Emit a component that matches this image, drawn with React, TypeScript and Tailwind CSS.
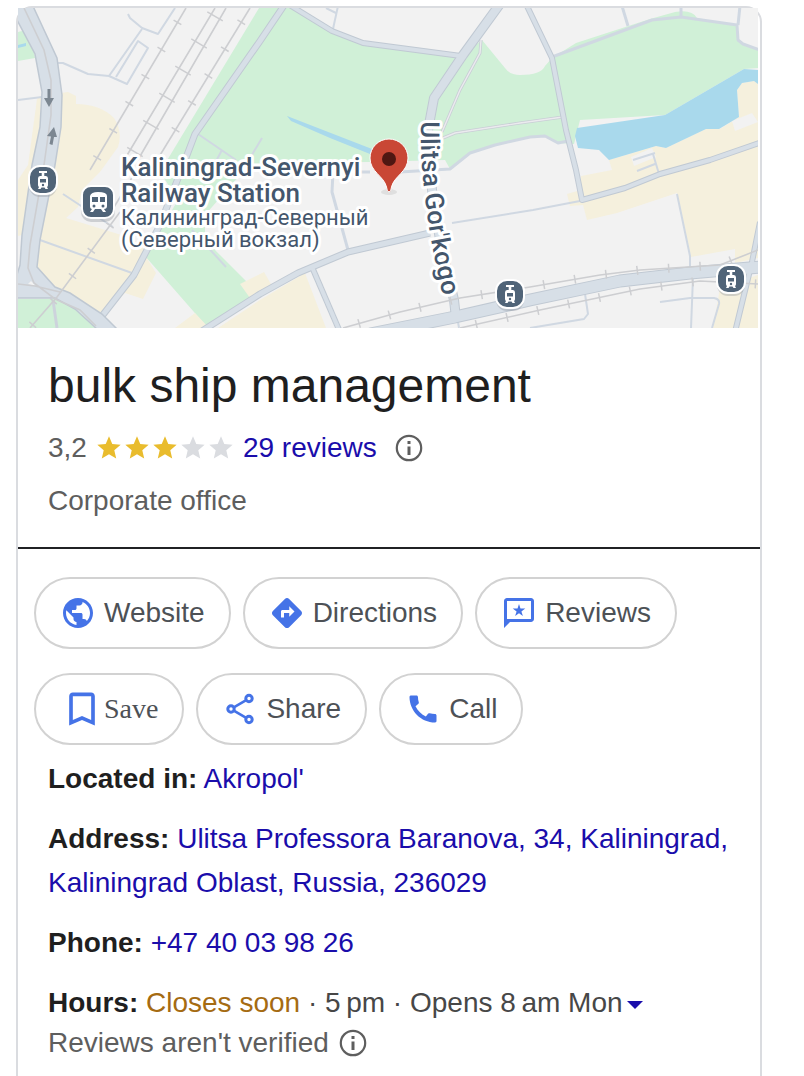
import React from 'react';
import { MdBookmarkBorder, MdCall, MdDirections, MdPublic, MdStar } from 'react-icons/md';

const roads: { d: string; w: number }[] = [
    { d: 'M500 4L463 55L434 98L428 130L432 190L440 240L454 300L456 318', w: 8 },
    { d: 'M285 4L260 41L195 134L187 155L160 225L134 275L102 316', w: 5 },
    { d: 'M288 4L332 31L363 43L461 56', w: 4 },
    { d: 'M312 267L340 332', w: 4 },
    { d: 'M202 331L260 294L298 273L348 252L430 233', w: 5 },
    { d: 'M526 4L552 58L566 130L576 170L582 200L625 188L660 174L710 160L762 142', w: 4 },
    { d: 'M760 222L752 262L735 332', w: 4 },
    { d: 'M370 334L455 317L530 300L620 281L690 273L762 267', w: 11 },
];

const lanes: { d: string; w: number }[] = [
    { d: 'M552 57L652 20L681 17L737 25L738 40L743 44L760 50', w: 3 },
    { d: 'M622 6L628 26M681 6V17M740 6L738 25', w: 3 },
    { d: 'M348 250L332 192L333 172H370', w: 3 },
    { d: 'M400 172L450 169L470 153L495 145L530 137L545 136L558 143L568 141', w: 3 },
    { d: 'M338 6L333 29M326 8L336 13', w: 2 },
    { d: 'M128 14L130 18L142 28L158 34L175 8', w: 2 },
    { d: 'M142 29L109 76M116 77L138 41L148 48L127 84L109 76L88 74L63 63L57 63', w: 2 },
    { d: 'M18 100L42 97M40 240L132 273M63 194L113 227', w: 2 },
    { d: 'M198 134L236 160M222 150L215 163M262 138L250 158M192 230L226 267', w: 2 },
    { d: 'M452 223L533 210L580 201', w: 2 },
    { d: 'M633 160L655 153M653 154L659 174M637 171L655 164', w: 2 },
    { d: 'M677 194L690 256V268M693 277L691 328', w: 2 },
    { d: 'M660 302L690 298H714Q720 299 719 304L712 328', w: 2 },
    { d: 'M585 294L588 314L584 319L530 328M458 322L459 328', w: 2 },
];

const rails = [
    'M186 8L90 170',
    'M250 8L154 165',
    'M120 212L57 297L30 328',
    'M343 328L400 312L460 298L530 287L600 275L640 270L720 265L758 250',
    'M460 328L540 310L640 289L700 281L758 284',
];

const TramBadge: React.FC<{ x: number; y: number }> = ({ x, y }) => (
    <g transform={`translate(${x} ${y})`}>
        <rect x="-14" y="-12" width="28" height="29" rx="11" fill="#8a8f98" opacity="0.35" />
        <rect x="-14" y="-14" width="28" height="28" rx="11" fill="#506478" stroke="#fff" strokeWidth="2" />
        <path d="M-4-9H4V-7H1.300V-4H3Q5-4 5-1.500V5Q5 6.500 4 7L5 9H2.500L1.500 7.500H-1.500L-2.500 9H-5L-4 7Q-5 6.500-5 5V-1.500Q-5-4-3-4H-1.300V-7H-4Z" fill="#fff" />
        <rect x="-3" y="-1" width="6" height="3.500" fill="#506478" />
        <circle cy="5" r="1.200" fill="#506478" />
    </g>
);

const StationMap: React.FC = () => (
    <svg viewBox="18 8 740 320" preserveAspectRatio="xMidYMid slice" className="block h-80 w-full" role="img" aria-label="Map">
        <rect x="18" y="8" width="740" height="320" fill="#f2f2f2" />

        {/* parks */}
        <g fill="#d0f0d7">
            <path d="M259 8L160 172L178 200L145 256L208 328L259 294L215 250L205 232V215L240 175L262 163L370 162L445 160L450 169L470 153L495 145L530 137L545 136L558 143L574 144L580 120L665 115L744 69L758 68V50L743 44L738 40L737 26L697 18Q692 9 675 12L650 19L576 43L552 58L545 66Q541 75 520 75Q510 75 505 68L482 40L461 56L363 43L332 31L290 8Z" />
            <path d="M18 32L30 29L35 58L18 61ZM18 299H55L75 308L96 328H18ZM758 104L754 109L757 121H758Z" />
        </g>

        {/* built-up blocks */}
        <g fill="#f5f0dd">
            <path d="M61 93L68 92L76 96V104Q100 104 114 118Q123 132 118 147L100 172L82 190L78 207L66 218L128 237L150 250L146 257L156 273L143 299L125 293L100 316L55 288L36 267L42 165Z" />
            <path d="M37 99L42 95L40 127L22 235L18 236V180L28 165Z" />
            <path d="M175 328L195 313L209 328ZM240 284L264 272L272 286L250 298ZM218 328L260 300L305 273L326 328Z" />
            <path d="M581 176L612 170L609 160L656 146L666 148L706 129L720 129L739 117L737 90L742 83L754 81L758 84V258L735 263V249L691 257L677 193L617 213L587 220L583 205L570 206L567 194L581 190Z" />
            <path d="M720 288L758 275V328H713Z" />
        </g>
        <path d="M631 157L652 148L656 157L634 166ZM732 121L752 113L758 122L735 131Z" fill="#f2f2f2" />

        {/* water */}
        <g fill="#a9d9ec">
            <path d="M744 69L758 70V84L754 81L742 83L737 90L739 117L719 129H706L666 148L656 146L609 160L599 150L578 148L575 136L577 128L665 115Z" />
            <path d="M287 116L372 149L370 154L330 138L291 121ZM18 45L26 43V46L18 48Z" />
        </g>

        {/* footpaths */}
        <g fill="none">
            <path d="M481 40L480 53L460 90L442 132M443 138L455 133L520 123L563 117" stroke="#c9ced6" strokeWidth="3" />
            <path d="M481 40L480 53L460 90L442 132M443 138L455 133L520 123L563 117" stroke="#ebebee" strokeWidth="1.4" />
        </g>

        {/* streets */}
        <g fill="none" strokeLinejoin="round">
            {lanes.map((lane) => (
                <path key={lane.d} d={lane.d} stroke="#d0d8e2" strokeWidth={lane.w} />
            ))}
            {roads.map((road) => (
                <path key={road.d} d={road.d} stroke="#c0c9d3" strokeWidth={road.w + 2} />
            ))}
            {roads.map((road) => (
                <path key={road.d} d={road.d} stroke="#d7dfe7" strokeWidth={road.w} />
            ))}
        </g>
        <path
            d="M16 18L35 54L42 92L40 127L32 165L22 235L20 265L16 278V298H55L75 309L98 330H118L102 314L70 293L55 287L37 267L40 240L55 165L61 127L62 95L57 58L32 4H16Z"
            fill="#d7dfe7"
            stroke="#bfc8d2"
            strokeWidth="1.5"
        />
        <path d="M28 284L31 281L36 286Z" fill="#f2f2f2" />
        <path d="M53 300L57 328" stroke="#cdd3dc" strokeWidth="3" />

        {/* railways */}
        <g fill="none" stroke="#cdced1" strokeWidth="1.6">
            <path d="M24 8L44 50L51 80V115L44 165L30 245L28 268L34 283L55 299L80 310L96 326M18 284L35 286L60 292" />
            {rails.map((rail) => (
                <path key={rail} d={rail} />
            ))}
            {rails.map((rail) => (
                <path key={rail} d={rail} strokeWidth="9" strokeDasharray="1.5 30" strokeDashoffset="-16" />
            ))}
            <path d="M215 8L126 157M226 8L139 158" />
            <path d="M220 8L132 157" strokeWidth="18" strokeDasharray="1.5 30" strokeDashoffset="-9" />
            <path d="M133 176L111 212" />
        </g>

        {/* one-way arrows */}
        <path d="M47.500 89H50.500V98H54L49 107L44 98H47.500ZM52.500 145L49.500 144L51 136.500L47 136L54 127L57 137H54Z" fill="#7c8791" />

        <TramBadge x={43} y={180} />
        <TramBadge x={510} y={294} />
        <TramBadge x={731} y={279} />
        <g transform="translate(98 202)">
            <rect x="-17" y="-14" width="34" height="34" rx="10" fill="#8a8f98" opacity="0.35" />
            <rect x="-16" y="-16" width="32" height="32" rx="9" fill="#506478" stroke="#fff" strokeWidth="2" />
            <path d="M-8-6Q-7-10 0-10Q9-10 9-6V4Q9 7 6 7L8 10H5L3 7H-3L-5 10H-8L-6 7Q-8 7-8 4Z" fill="#fff" />
            <path d="M-6-5H0V0H-6ZM2-5H7V0H2Z" fill="#506478" />
            <circle cx="-4" cy="4" r="1.500" fill="#506478" />
            <circle cx="5" cy="4" r="1.500" fill="#506478" />
        </g>

        <g
            fill="#44566c"
            stroke="#fff"
            strokeWidth="6"
            strokeLinejoin="round"
            paintOrder="stroke"
            fontFamily="Roboto, sans-serif"
        >
            <g fontSize="26" fontWeight="500">
                <text x="121" y="176">Kaliningrad-Severnyi</text>
                <text x="121" y="202">Railway Station</text>
            </g>
            <g fontSize="22">
                <text x="121" y="225">Калининград-Северный</text>
                <text x="121" y="247">(Северный вокзал)</text>
            </g>
            <path id="gorkogo" d="M421 121C420 165 424 190 428 220S439 275 445 310" fill="none" stroke="none" />
            <text fontSize="26" fontWeight="500">
                <textPath href="#gorkogo">Ulitsa Gor'kogo</textPath>
            </text>
        </g>

        {/* pin */}
        <ellipse cx="389" cy="192" rx="8" ry="3" fill="#000" opacity="0.08" />
        <path
            d="M389 192Q387 192 386.500 187C384 176 370 172 370 158A19 19 0 0 1 408 158C408 172 394 176 391.500 187Q391 192 389 192Z"
            fill="#c94735"
            stroke="#fff"
            strokeWidth="1"
        />
        <circle cx="389" cy="159" r="7" fill="#4f1712" />
    </svg>
);

const InfoIcon: React.FC = () => (
    <svg viewBox="0 0 32 32" className="size-8" aria-hidden="true">
        <circle cx="16" cy="16" r="12.2" fill="none" stroke="#5e5e5e" strokeWidth="2.2" />
        <path d="M14.500 9H17.500V12H14.500ZM14.500 14.500H17.500V23H14.500Z" fill="#5e5e5e" />
    </svg>
);

const ReviewsIcon: React.FC = () => (
    <svg viewBox="0 0 24 24" className="size-9" fill="#4573e7" aria-hidden="true">
        <path d="M20 2H4c-1.100 0-2 .9-2 2v18l4-4h14c1.100 0 2-.9 2-2V4c0-1.100-.9-2-2-2zm0 14H4V4h16v12z" />
        <path d="M12 6l.98 3.050H16.200l-2.600 1.900 1 3.050-2.600-1.880L9.400 14l1-3.050-2.600-1.900h3.220z" />
    </svg>
);

const ShareIcon: React.FC = () => (
    <svg viewBox="0 0 36 36" className="size-9" fill="none" stroke="#4573e7" strokeWidth="3" aria-hidden="true">
        <circle cx="9" cy="18" r="3.200" />
        <circle cx="27" cy="7.500" r="3.200" />
        <circle cx="27" cy="28.500" r="3.200" />
        <path d="M11.800 16.400L24.200 9.200M11.800 19.600L24.200 26.800" strokeWidth="2.600" />
    </svg>
);

const pill = 'flex h-18 items-center rounded-full border-2 border-[#d2d2d2] px-6 text-[#4d5156] hover:bg-gray-50';
const link = 'text-[#1a0dab] hover:underline';

const actions = [
    { label: 'Website', icon: <MdPublic className="size-9 text-[#4573e7]" />, href: '#website' },
    { label: 'Directions', icon: <MdDirections className="size-9 text-[#4573e7]" />, href: '#directions' },
    { label: 'Reviews', icon: <ReviewsIcon />, href: '#reviews' },
];

const App: React.FC = () => {
    return (
        <div className="bg-white pt-1.5 pr-[42px] pl-4 font-['Liberation_Sans',Arial,sans-serif] text-[28px] leading-11 text-[#1f1f1f]">
            <main className="min-h-[1070px] rounded-t-2xl border-2 border-b-0 border-[#dadce0]">
                <div className="pr-0.5">
                    <StationMap />
                </div>

                <header className="border-b-2 border-[#202124] px-[30px] pt-[30px] pb-6">
                    <h1 className="text-[48px] leading-14">bulk ship management</h1>
                    <div className="mt-3 flex items-center text-[#5e5e5e]">
                        <span>3,2</span>
                        <span className="mx-2 flex" role="img" aria-label="Rated 3,2 out of 5">
                            {[1, 2, 3, 4, 5].map((n) => (
                                <MdStar key={n} className={n <= 3 ? 'size-7 text-[#e9bc2d]' : 'size-7 text-[#dadce0]'} />
                            ))}
                        </span>
                        <a href="#reviews" className={link}>
                            29 reviews
                        </a>
                        <button type="button" aria-label="About reviews" className="ml-4">
                            <InfoIcon />
                        </button>
                    </div>
                    <p className="mt-[9px] text-[#5e5e5e]">Corporate office</p>
                </header>

                <nav className="flex flex-wrap gap-x-3 gap-y-6 px-4 pt-7">
                    {actions.map((action) => (
                        <a key={action.label} href={action.href} className={`${pill} gap-2`}>
                            {action.icon}
                            <span>{action.label}</span>
                        </a>
                    ))}
                    <button type="button" className={pill}>
                        <MdBookmarkBorder className="size-11 text-[#4573e7]" />
                        <span className="font-['Liberation_Serif',serif]">Save</span>
                    </button>
                    <button type="button" className={`${pill} gap-2`}>
                        <ShareIcon />
                        <span>Share</span>
                    </button>
                    <a href="tel:+4740039826" className={`${pill} gap-2`}>
                        <MdCall className="size-9 text-[#4573e7]" />
                        <span>Call</span>
                    </a>
                </nav>

                <section className="px-[30px] pt-3">
                    <div className="space-y-4">
                        <p>
                            <b>Located in:</b>{' '}
                            <a href="#akropol" className={link}>
                                Akropol'
                            </a>
                        </p>
                        <p>
                            <b>Address:</b>{' '}
                            <a href="#address" className={link}>
                                Ulitsa Professora Baranova, 34, Kaliningrad, Kaliningrad Oblast, Russia, 236029
                            </a>
                        </p>
                        <p>
                            <b>Phone:</b>{' '}
                            <a href="tel:+4740039826" className={link}>
                                +47 40 03 98 26
                            </a>
                        </p>
                        <p className="text-[#474747]">
                            <b className="text-[#1f1f1f]">Hours:</b> <span className="text-[#a56b12]">Closes soon</span> · 5{'\u202f'}pm · Opens 8
                            {'\u202f'}am Mon
                            <button type="button" aria-label="Show all opening hours" className="ml-1 align-middle">
                                <svg viewBox="0 0 16 8" className="block h-2 w-4" fill="#1a0dab" aria-hidden="true">
                                    <path d="M0 0H16L8 8Z" />
                                </svg>
                            </button>
                        </p>
                    </div>
                    <div className="flex items-center gap-2 leading-9 text-[#5e5e5e]">
                        <span>Reviews aren't verified</span>
                        <button type="button" aria-label="About review verification">
                            <InfoIcon />
                        </button>
                    </div>
                </section>
            </main>
        </div>
    );
};

export default App;
